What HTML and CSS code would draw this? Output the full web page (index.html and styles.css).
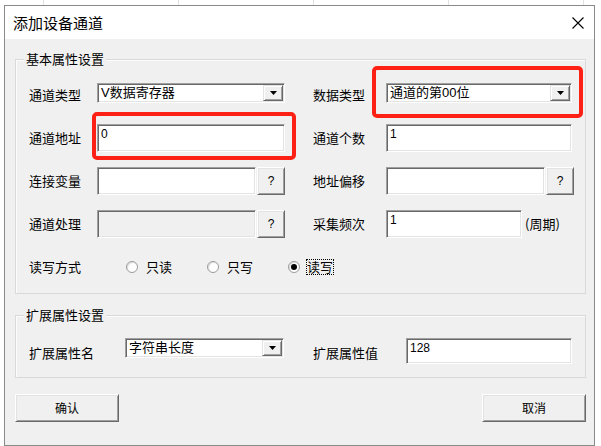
FILE: index.html
```html
<!DOCTYPE html>
<html lang="zh-CN">
<head>
<meta charset="utf-8">
<title>添加设备通道</title>
<link rel="stylesheet" href="styles.css">
</head>
<body>
<div class="window">
  <div class="titlebar">
    <span class="title">添加设备通道</span>
    <svg class="close" width="12" height="12" viewBox="0 0 12 12"><path d="M0.5 0.5L11.5 11.5M11.5 0.5L0.5 11.5" stroke="#000" stroke-width="1.1" fill="none"/></svg>
  </div>
  <div class="client">
    <div class="group group-basic">
      <span class="legend">基本属性设置</span>
      <div class="form form-basic">
        <span class="lbl">通道类型</span>
        <div class="combo"><span class="combo-text">V数据寄存器</span><span class="drop"><svg width="7" height="4" viewBox="0 0 7 4"><path d="M0 0H7L3.5 4Z" fill="#000"/></svg></span></div>
        <span class="lbl lbl-r">数据类型</span>
        <div class="combo"><span class="combo-text">通道的第00位</span><span class="drop"><svg width="7" height="4" viewBox="0 0 7 4"><path d="M0 0H7L3.5 4Z" fill="#000"/></svg></span></div>

        <span class="lbl">通道地址</span>
        <div class="edit">0</div>
        <span class="lbl lbl-r">通道个数</span>
        <div class="edit">1</div>

        <span class="lbl">连接变量</span>
        <div class="field"><div class="edit edit-short"></div><span class="btn btn-q">?</span></div>
        <span class="lbl lbl-r">地址偏移</span>
        <div class="field"><div class="edit edit-short"></div><span class="btn btn-q">?</span></div>

        <span class="lbl">通道处理</span>
        <div class="field"><div class="edit edit-short edit-disabled"></div><span class="btn btn-q">?</span></div>
        <span class="lbl lbl-r">采集频次</span>
        <div class="field"><div class="edit edit-freq">1</div><span class="unit">(周期)</span></div>

        <span class="lbl">读写方式</span>
        <div class="radios">
          <span class="radio"><span class="dot"></span><span class="rtext">只读</span></span>
          <span class="radio"><span class="dot"></span><span class="rtext">只写</span></span>
          <span class="radio"><span class="dot dot-on"></span><span class="rtext rtext-focus">读写</span></span>
        </div>
      </div>
    </div>

    <div class="group group-ext">
      <span class="legend">扩展属性设置</span>
      <div class="form form-ext">
        <span class="lbl">扩展属性名</span>
        <div class="combo"><span class="combo-text">字符串长度</span><span class="drop"><svg width="7" height="4" viewBox="0 0 7 4"><path d="M0 0H7L3.5 4Z" fill="#000"/></svg></span></div>
        <span class="lbl lbl-r2">扩展属性值</span>
        <div class="edit edit-ext">128</div>
      </div>
    </div>

    <div class="actions">
      <span class="btn btn-main">确认</span>
      <span class="btn btn-main">取消</span>
    </div>
  </div>
  <div class="mark mark-addr"></div>
  <div class="mark mark-type"></div>
</div>
</body>
</html>
```
FILE: styles.css
```css
* { box-sizing: border-box; }
html, body { margin: 0; padding: 0; }
body {
  width: 601px;
  height: 446px;
  overflow: hidden;
  background-color: #fff;
  background-image: repeating-linear-gradient(to right, #e2e2e2 0 1px, transparent 1px 135px);
  background-position: 43px 0;
  font-family: "Noto Sans CJK SC", "Noto Sans", sans-serif;
  color: #000;
}
.window {
  position: relative;
  margin: 5px 0 0 4px;
  width: 591px;
  height: 441px;
  border: 1px solid #8a8a8a;
  background: #f0f0f0;
  display: flex;
  flex-direction: column;
}
.titlebar {
  height: 33px;
  flex: none;
  background: #fff;
  display: flex;
  align-items: center;
  justify-content: space-between;
  padding: 0 10px 0 8px;
}
.title { font-size: 15px; line-height: 20px; }
.close { display: block; }
.client {
  flex: 1;
  padding: 0 8px 0 10px;
}
.group {
  border: 1px solid #d9d9d9;
  box-shadow: inset 1px 1px 0 #fcfcfc;
}
.group-basic { margin-top: 20px; height: 235px; }
.group-ext { margin-top: 21px; height: 63px; }
.legend {
  display: table;
  margin: -9px 0 0 8px;
  padding: 0 2px;
  background: #f0f0f0;
  font-size: 13px;
  line-height: 16px;
}
.form {
  display: grid;
  margin-left: 13px;
  align-items: center;
}
.form-basic {
  margin-top: 14px;
  grid-template-columns: 68px 188px 101px 186px;
  grid-template-rows: repeat(5, 28px);
  row-gap: 15px;
}
.form-ext {
  margin-top: 15px;
  grid-template-columns: 96px 159px 122px 166px;
  grid-template-rows: 26px;
  align-items: start;
}
.lbl { font-size: 13px; line-height: 16px; white-space: nowrap; }
.lbl-r { padding-left: 28px; }
.lbl-r2 { padding-left: 29px; }
.form-ext .lbl { align-self: center; margin-top: 3px; }
.form-basic .lbl { margin-top: 0; }

/* sunken controls */
.combo, .edit {
  background: #fff;
  border: 1px solid;
  border-color: #a0a0a0 #ffffff #ffffff #a0a0a0;
  box-shadow: inset 1px 1px 0 #696969, inset -1px -1px 0 #e3e3e3;
}
.combo {
  align-self: start;
  margin-top: 2px;
  height: 20px;
  display: flex;
  align-items: stretch;
  padding: 1px 1px 1px 2px;
}
.form-ext .combo { margin-top: 0; }
.combo-text {
  flex: 1;
  font-family: "Liberation Sans", "Noto Sans CJK SC", sans-serif;
  font-size: 13px;
  line-height: 16px;
  padding-left: 1px;
  white-space: nowrap;
}
.drop {
  width: 20px;
  flex: none;
  display: flex;
  align-items: center;
  justify-content: center;
  background: #f0f0f0;
  border: 1px solid;
  border-color: #e3e3e3 #696969 #696969 #e3e3e3;
  box-shadow: inset 1px 1px 0 #fff, inset -1px -1px 0 #a0a0a0;
}
.drop svg { display: block; }
.edit {
  height: 28px;
  padding: 2px 3px 0 3px;
  font-family: "Liberation Sans", "Noto Sans CJK SC", sans-serif;
  font-size: 12px;
  line-height: 14px;
}
.edit-ext { height: 26px; }
.edit-disabled { background: #f0f0f0; }
.field { display: flex; align-items: center; gap: 1px; }
.edit-short { width: 161px; flex: none; }
.field .edit-short { width: 159px; }
.edit-freq { width: 136px; flex: none; }
.unit { font-size: 13px; line-height: 16px; margin-left: 2px; white-space: nowrap; }

/* raised buttons */
.btn {
  display: flex;
  align-items: center;
  justify-content: center;
  background: #f0f0f0;
  border: 1px solid;
  border-color: #ffffff #696969 #696969 #ffffff;
  box-shadow: inset 1px 1px 0 #e3e3e3, inset -1px -1px 0 #a0a0a0;
}
.btn-q {
  width: 28px;
  height: 28px;
  flex: none;
  font-family: "Liberation Sans", sans-serif;
  font-size: 12px;
}
.actions {
  margin-top: 16px;
  display: flex;
  justify-content: space-between;
}
.btn-main {
  width: 104px;
  height: 28px;
  font-size: 12px;
  line-height: 14px;
}

/* radios */
.radios {
  grid-column: 2 / -1;
  display: flex;
  padding-left: 29px;
}
.radio {
  width: 81px;
  display: flex;
  align-items: center;
  gap: 8px;
}
.dot {
  width: 12px;
  height: 12px;
  border-radius: 50%;
  border: 1px solid #9a9a9a;
  background: #fff;
  box-shadow: inset 1px 1px 1px #dcdcdc;
  display: flex;
  align-items: center;
  justify-content: center;
}
.dot-on::after {
  content: "";
  width: 6px;
  height: 6px;
  border-radius: 50%;
  background: #000;
}
.rtext { font-size: 13px; line-height: 16px; white-space: nowrap; }
.rtext-focus {
  margin-left: -2px;
  border: 1px dotted #000;
  line-height: 14px;
}

/* red annotation marks */
.mark {
  position: absolute;
  border: 4px solid #fd2115;
  border-radius: 5px;
}
.mark-addr { left: 87px; top: 106px; width: 204px; height: 48px; }
.mark-type { left: 367px; top: 60px; width: 211px; height: 52px; }
```
